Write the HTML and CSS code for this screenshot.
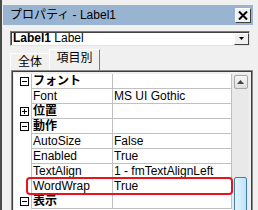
FILE: index.html
```html
<!DOCTYPE html>
<html>
<head>
<meta charset="utf-8">
<link rel="stylesheet" href="styles.css">
</head>
<body>
<div class="window">
  <div class="titlebar">
    <span class="title">プロパティ - Label1</span>
    <span class="close"><svg width="10" height="9" viewBox="0 0 10 9"><path d="M1 0.5 L9 8.5 M9 0.5 L1 8.5" stroke="#000" stroke-width="2" fill="none"/></svg></span>
  </div>
  <div class="combo">
    <span class="combo-text"><b>Label1</b> Label</span>
    <span class="dd"><svg width="5" height="3" viewBox="0 0 5 3"><path d="M0 0 H5 L2.5 3 Z" fill="#000"/></svg></span>
  </div>
  <div class="tabs">
    <div class="tab">全体</div>
    <div class="tab active">項目別</div>
  </div>
  <div class="grid">
    <div class="rows">
      <div class="row cat"><span class="exp"><span class="box minus"></span></span><span class="name">フォント</span><span class="val"></span></div>
      <div class="row"><span class="exp"></span><span class="name">Font</span><span class="val">MS UI Gothic</span></div>
      <div class="row cat"><span class="exp"><span class="box plus"></span></span><span class="name">位置</span><span class="val"></span></div>
      <div class="row cat"><span class="exp"><span class="box minus"></span></span><span class="name">動作</span><span class="val"></span></div>
      <div class="row"><span class="exp"></span><span class="name">AutoSize</span><span class="val">False</span></div>
      <div class="row"><span class="exp"></span><span class="name">Enabled</span><span class="val">True</span></div>
      <div class="row"><span class="exp"></span><span class="name">TextAlign</span><span class="val">1 - fmTextAlignLeft</span></div>
      <div class="row"><span class="exp"></span><span class="name">WordWrap</span><span class="val">True</span></div>
      <div class="row cat"><span class="exp"><span class="box minus"></span></span><span class="name">表示</span><span class="val"></span></div>
    </div>
    <div class="scrollbar">
      <div class="sb-up"><svg width="7" height="4" viewBox="0 0 7 4"><path d="M0 4 L3.5 0 L7 4 Z" fill="#444"/></svg></div>
      <div class="sb-thumb"></div>
    </div>
  </div>
</div>
<div class="highlight"></div>
</body>
</html>
```
FILE: styles.css
```css
html, body {
  margin: 0;
  padding: 0;
}
body {
  width: 258px;
  height: 210px;
  overflow: hidden;
  background: #f0f0f0;
  position: relative;
  font-family: "Liberation Sans", "Noto Sans CJK JP", sans-serif;
  font-size: 12px;
  color: #000;
}
.window {
  height: 210px;
  box-sizing: border-box;
  border-left: 2px solid #4a4a4a;
  padding-top: 5px;
}
.titlebar {
  margin-left: 1px;
  width: 250px;
  height: 20px;
  background: #99b4d1;
  display: flex;
  justify-content: space-between;
  align-items: flex-start;
  box-sizing: border-box;
  padding: 0 2px 0 7px;
}
.title {
  line-height: 20px;
}
.close {
  margin-top: 3px;
  width: 16px;
  height: 15px;
  box-sizing: border-box;
  background: #f0f0f0;
  border: 1px solid;
  border-color: #ffffff #404040 #404040 #ffffff;
  display: flex;
  align-items: center;
  justify-content: center;
}
.combo {
  margin: 6px 0 0 8px;
  width: 240px;
  height: 15px;
  box-sizing: border-box;
  background: #fff;
  border: 1px solid;
  border-color: #7a7a7a #e3e3e3 #e3e3e3 #7a7a7a;
  box-shadow: inset 1px 1px 0 #404040;
  display: flex;
  align-items: center;
  justify-content: space-between;
}
.combo-text {
  padding-left: 2px;
  line-height: 13px;
}
.dd {
  width: 15px;
  height: 12px;
  margin-right: 0;
  box-sizing: border-box;
  background: #f0f0f0;
  border: 1px solid;
  border-color: #ffffff #404040 #404040 #ffffff;
  display: flex;
  align-items: center;
  justify-content: center;
}
.tabs {
  margin: 3px 0 0 8px;
  height: 21px;
  display: flex;
  align-items: flex-end;
}
.tab {
  width: 40px;
  height: 17px;
  box-sizing: border-box;
  border: 1px solid;
  border-bottom: none;
  border-color: #ffffff #7a7a7a #7a7a7a #ffffff;
  text-align: center;
  line-height: 17px;
}
.tab.active {
  width: 51px;
  height: 21px;
  line-height: 16px;
  margin-left: -1px;
}
.grid {
  margin-left: 9px;
  width: 242px;
  height: 150px;
  box-sizing: border-box;
  border: 1px solid #8a8a8a;
  box-shadow: inset 1px 1px 0 #3c3c3c, inset -1px 0 0 #3c3c3c;
  padding: 3px 3px 0 2px;
  display: flex;
  background: #f0f0f0;
}
.rows {
  width: 218px;
  background: #fff;
}
.row {
  display: flex;
  height: 15px;
}
.exp {
  width: 17px;
  height: 15px;
  flex: none;
  display: flex;
  align-items: center;
  justify-content: flex-end;
  padding-right: 2px;
  box-sizing: border-box;
}
.box {
  width: 9px;
  height: 9px;
  box-sizing: border-box;
  border: 1px solid #000;
  position: relative;
  background: #fff;
}
.box::before {
  content: "";
  position: absolute;
  left: 1px;
  top: 3px;
  width: 5px;
  height: 1px;
  background: #000;
}
.box.plus::after {
  content: "";
  position: absolute;
  left: 3px;
  top: 1px;
  width: 1px;
  height: 5px;
  background: #000;
}
.name, .val {
  height: 15px;
  box-sizing: border-box;
  border-left: 1px solid #c0c0c0;
  border-bottom: 1px solid #c0c0c0;
  line-height: 14px;
  white-space: nowrap;
  overflow: hidden;
}
.name {
  width: 81px;
  padding-left: 1px;
}
.val {
  width: 120px;
  border-right: 1px solid #c0c0c0;
  padding-left: 1px;
}
.cat .name {
  font-weight: bold;
  overflow: visible;
}
.scrollbar {
  width: 17px;
  background: #e9e9e9;
  display: flex;
  flex-direction: column;
  align-items: center;
}
.sb-up {
  margin-top: 1px;
  width: 14px;
  height: 14px;
  box-sizing: border-box;
  border: 1px solid #a8a8a8;
  border-radius: 2px;
  background: linear-gradient(#f6f6f6, #dedede);
  display: flex;
  align-items: center;
  justify-content: center;
}
.sb-thumb {
  margin-top: 88px;
  width: 13px;
  height: 40px;
  box-sizing: border-box;
  border: 1px solid #3c7fb1;
  border-radius: 2px;
  background: linear-gradient(90deg, #e3f4fc, #bfe3f7);
}
.highlight {
  position: absolute;
  left: 26px;
  top: 177px;
  width: 207px;
  height: 18px;
  box-sizing: border-box;
  border: 2px solid #e8141c;
  border-radius: 4px;
}
```
